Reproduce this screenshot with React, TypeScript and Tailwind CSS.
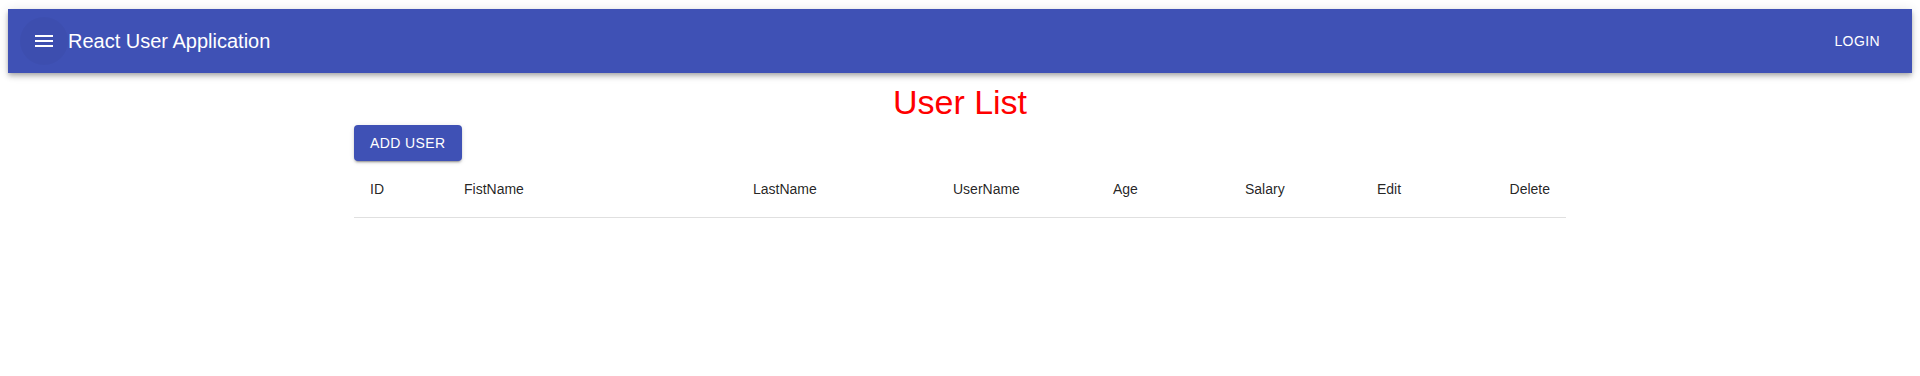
import React from "react";

const cols = ["ID", "FistName", "LastName", "UserName", "Age", "Salary", "Edit", "Delete"];

export default function App() {
  return (
    <div className="mx-2 mt-[9px] font-['Liberation_Sans',Arial,sans-serif] text-black/[0.87]">
      <header className="flex h-16 items-center bg-[#3f51b5] px-6 text-white shadow-[0px_2px_4px_-1px_rgba(0,0,0,0.2),0px_4px_5px_0px_rgba(0,0,0,0.14),0px_1px_10px_0px_rgba(0,0,0,0.12)]">
        <button className="-ml-3 flex h-12 w-12 items-center justify-center rounded-full bg-black/[0.03]">
          <svg viewBox="0 0 24 24" className="h-6 w-6" fill="white">
            <path d="M3 18h18v-2H3v2zm0-5h18v-2H3v2zm0-7v2h18V6H3z" />
          </svg>
        </button>
        <h6 className="flex-1 text-[20px] leading-8 text-white">React User Application</h6>
        <button className="px-2 py-1.5 text-[14px] uppercase leading-6 tracking-[0.4px] text-white">
          Login
        </button>
      </header>
      <div className="pt-[8px]">
        <h4 className="text-center text-[34px] leading-[42px] text-[#ff0000]">User List</h4>
      </div>
      <div className="mx-auto mt-[2px] w-[1212px]">
        <button className="h-9 rounded bg-[#3f51b5] px-4 text-[14px] uppercase leading-6 tracking-[0.4px] text-white shadow-[0px_3px_1px_-2px_rgba(0,0,0,0.2),0px_2px_2px_0px_rgba(0,0,0,0.14),0px_1px_5px_0px_rgba(0,0,0,0.12)]">
          Add User
        </button>
        <div className="grid grid-cols-[94px_289px_200px_160px_132px_132px_132px_1fr] border-b border-[#e0e0e0] text-[14px] leading-6">
          {cols.map((c, i) => (
            <div key={c} className={`p-4 ${i === cols.length - 1 ? "text-right" : "text-left"}`}>
              {c}
            </div>
          ))}
        </div>
      </div>
    </div>
  );
}
